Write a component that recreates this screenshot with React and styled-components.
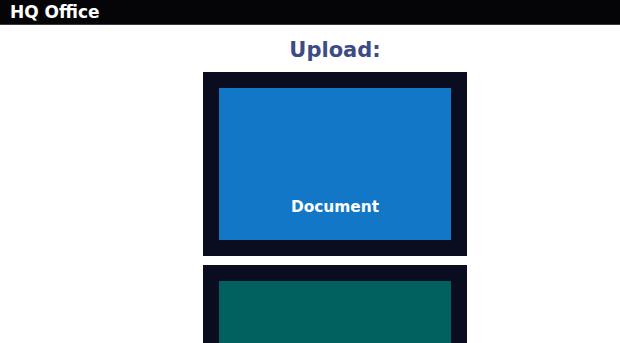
import React from "react";
import styled, { createGlobalStyle } from "styled-components";

const Global = createGlobalStyle`
  html, body { margin: 0; padding: 0; background: #ffffff; overflow: hidden; }
  body { font-family: "DejaVu Sans", "Liberation Sans", sans-serif; }
`;

const Header = styled.header`
  height: 25px;
  background: #050508;
  border-bottom: 1px solid #3a3a40;
  box-sizing: border-box;
  display: flex;
  align-items: center;
  padding-left: 10px;
`;

const Brand = styled.h1`
  margin: 0;
  color: #ffffff;
  font-size: 17px;
  font-weight: bold;
  line-height: 1;
  padding-top: 1px;
`;

const Main = styled.main`
  display: flex;
  flex-direction: column;
  align-items: center;
  padding-left: 50px;
  padding-top: 13px;
`;

const Title = styled.h2`
  margin: 0 0 10px;
  color: #3d4b87;
  font-size: 21px;
  font-weight: bold;
  line-height: 24px;
`;

const Tile = styled.button`
  box-sizing: border-box;
  width: 264px;
  height: 184px;
  border: 16px solid #0a0d20;
  background: ${(p) => p.$bg};
  display: flex;
  flex-direction: column;
  justify-content: flex-end;
  align-items: center;
  padding: 0 0 24px;
  margin: 0 0 9px;
  font-family: inherit;
  color: #ffffff;
  font-size: 15.4px;
  font-weight: bold;
  line-height: 18px;
  cursor: pointer;
`;

export default function App() {
  return (
    <>
      <Global />
      <Header>
        <Brand>HQ Office</Brand>
      </Header>
      <Main>
        <Title>Upload:</Title>
        <Tile $bg="#1177c6">Document</Tile>
        <Tile $bg="#01615f"></Tile>
      </Main>
    </>
  );
}
